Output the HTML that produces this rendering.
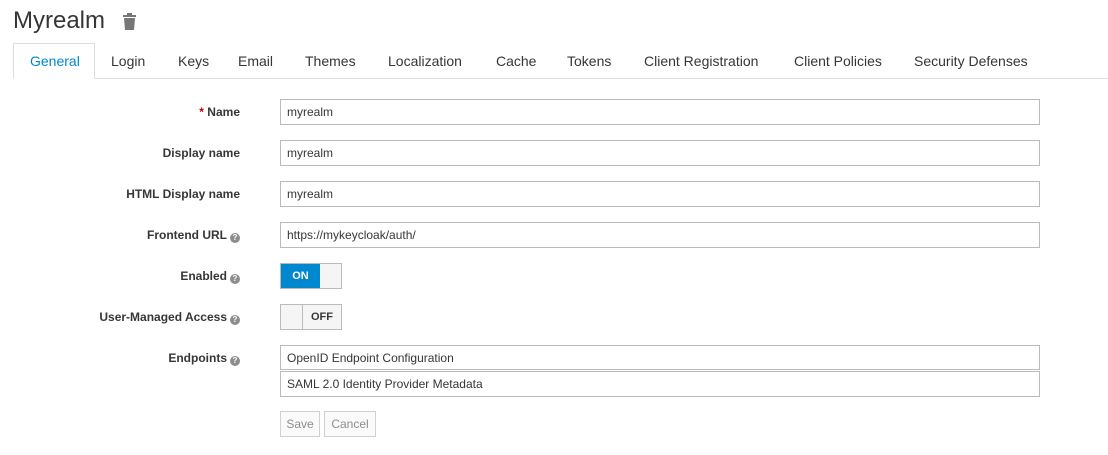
<!DOCTYPE html>
<html><head><style>
body{margin:0;width:1108px;height:455px;background:#fff;font-family:"Liberation Sans",sans-serif;color:#363636;position:relative;overflow:hidden}
.a{position:absolute}
h1{position:absolute;left:13px;top:7px;margin:0;font-weight:normal;font-size:24px;color:#363636}
.tabline{position:absolute;left:13px;right:0;top:78px;height:1px;background:#ddd}
.tab{position:absolute;top:53px;font-size:14px;color:#363636}
.gen{position:absolute;left:13px;top:43px;width:82px;height:36px;border:1px solid #ddd;border-bottom:1px solid #fff;background:#fff;box-sizing:border-box}
.lbl{position:absolute;right:868px;font-size:12px;font-weight:bold;color:#363636;text-align:right;white-space:nowrap}
.q{display:inline-block;width:10px;height:10px;border-radius:50%;background:#8b8d8f;color:#fff;font-size:8px;line-height:10px;text-align:center;margin-left:3px;vertical-align:-1px;font-weight:bold}
.inp{position:absolute;left:280px;width:760px;height:26px;border:1px solid #bbb;box-sizing:border-box;font-size:12px;padding-left:6px;line-height:24px;color:#363636}
.btn{position:absolute;top:411px;height:26px;border:1px solid #d1d1d1;background:#fafafa;box-sizing:border-box;font-size:12px;color:#8b8d8f;line-height:24px;text-align:center}
</style></head><body>
<h1>Myrealm</h1>
<svg class="a" style="left:122px;top:13px" width="15" height="17" viewBox="0 0 15 17"><rect x="1" y="2" width="13" height="2" fill="#777"/><rect x="5" y="0" width="5" height="3" fill="#777"/><path d="M2 5h11l-1 12H3z" fill="#777"/></svg>
<div class="tabline"></div>
<div class="gen"></div>
<div class="tab" style="left:30px;color:#0088ce">General</div>
<div class="tab" style="left:111px">Login</div>
<div class="tab" style="left:178px">Keys</div>
<div class="tab" style="left:238px">Email</div>
<div class="tab" style="left:305px">Themes</div>
<div class="tab" style="left:388px">Localization</div>
<div class="tab" style="left:496px">Cache</div>
<div class="tab" style="left:567px">Tokens</div>
<div class="tab" style="left:644px">Client Registration</div>
<div class="tab" style="left:794px">Client Policies</div>
<div class="tab" style="left:914px">Security Defenses</div>

<div class="lbl" style="top:105px"><span style="color:#c00">*</span> Name</div>
<div class="inp" style="top:99px">myrealm</div>
<div class="lbl" style="top:146px">Display name</div>
<div class="inp" style="top:140px">myrealm</div>
<div class="lbl" style="top:187px">HTML Display name</div>
<div class="inp" style="top:181px">myrealm</div>
<div class="lbl" style="top:228px">Frontend URL<span class="q">?</span></div>
<div class="inp" style="top:222px">https://mykeycloak/auth/</div>
<div class="lbl" style="top:269px">Enabled<span class="q">?</span></div>
<div class="a" style="left:280px;top:263px;width:62px;height:26px;border:1px solid #bbb;box-sizing:border-box;background:#f5f5f5">
<div style="width:39px;height:24px;background:#0088ce;color:#fff;font-size:11px;font-weight:bold;text-align:center;line-height:24px">ON</div></div>
<div class="lbl" style="top:310px">User-Managed Access<span class="q">?</span></div>
<div class="a" style="left:280px;top:304px;width:62px;height:26px;border:1px solid #bbb;box-sizing:border-box;background:#f5f5f5">
<div style="position:absolute;left:21px;top:0;width:1px;height:24px;background:#bbb"></div>
<div style="position:absolute;left:22px;width:38px;height:24px;font-size:11px;font-weight:bold;text-align:center;line-height:24px;color:#363636">OFF</div></div>
<div class="lbl" style="top:351px">Endpoints<span class="q">?</span></div>
<div class="inp" style="top:345px;height:25px">OpenID Endpoint Configuration</div>
<div class="inp" style="top:371px">SAML 2.0 Identity Provider Metadata</div>
<div class="btn" style="left:280px;width:40px">Save</div>
<div class="btn" style="left:324px;width:52px">Cancel</div>
</body></html>
